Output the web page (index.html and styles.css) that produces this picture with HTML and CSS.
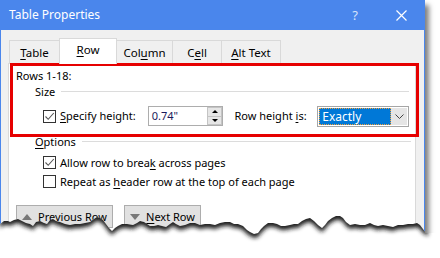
FILE: index.html
```html
<!DOCTYPE html>
<html lang="en">
<head>
    <meta charset="UTF-8">
    <title>Table Properties</title>
    <link rel="stylesheet" href="styles.css">
</head>
<body>
    <div class="window">
        <div class="titlebar">
            <span class="title">Table Properties</span>
            <span class="tb-btn help">?</span>
            <span class="tb-btn close">
                <svg width="11" height="11" viewBox="0 0 11 11"><path d="M0.5 0.5 L10.5 10.5 M10.5 0.5 L0.5 10.5" stroke="#fff" stroke-width="1.2" fill="none"/></svg>
            </span>
        </div>

        <div class="frame">
            <div class="tabs">
                <div class="tab tab-table"><u>T</u>able</div>
                <div class="tab tab-row active"><u>R</u>ow</div>
                <div class="tab tab-column">Col<u>u</u>mn</div>
                <div class="tab tab-cell">C<u>e</u>ll</div>
                <div class="tab tab-alt"><u>A</u>lt Text</div>
            </div>

            <div class="panel">
                <!-- red annotation box around the size settings -->
                <div class="rows-box">
                    <div class="rows-title">Rows 1-18:</div>
                    <div class="group-head size-head"><span>Size</span><i class="rule"></i></div>
                    <div class="size-row">
                        <label class="check size-check">
                            <span class="box"><svg width="11" height="11" viewBox="0 0 11 11"><path d="M1.5 5.5 L4.2 8.3 L9.8 2" stroke="#555" stroke-width="1.1" fill="none"/></svg></span>
                            <span><u>S</u>pecify height:</span>
                        </label>
                        <div class="spin">
                            <span class="spin-val">0.74"</span>
                            <span class="spin-btns">
                                <b class="spin-up"></b>
                                <b class="spin-down"></b>
                            </span>
                        </div>
                        <span class="rh-label">Row height <u>i</u>s:</span>
                        <div class="select">
                            <span class="sel-val">Exactly</span>
                            <span class="sel-arrow"><svg width="9" height="5" viewBox="0 0 9 5"><path d="M0.5 0.5 L4.5 4.5 L8.5 0.5" stroke="#444" stroke-width="1" fill="none"/></svg></span>
                        </div>
                    </div>
                </div>

                <div class="group-head options-head"><span><u>O</u>ptions</span><i class="rule"></i></div>
                <div class="option-list">
                    <label class="check">
                        <span class="box"><svg width="11" height="11" viewBox="0 0 11 11"><path d="M1.5 5.5 L4.2 8.3 L9.8 2" stroke="#555" stroke-width="1.1" fill="none"/></svg></span>
                        <span>Allow row to brea<u>k</u> across pages</span>
                    </label>
                    <label class="check">
                        <span class="box"></span>
                        <span>Repeat as <u>h</u>eader row at the top of each page</span>
                    </label>
                </div>

                <div class="nav">
                    <button class="nav-btn prev"><i class="tri tri-up"></i><span><u>P</u>revious Row</span></button>
                    <button class="nav-btn next"><i class="tri tri-down"></i><span><u>N</u>ext Row</span></button>
                </div>
            </div>
        </div>
    </div>

    <!-- torn paper edge over the bottom of the dialog -->
    <svg class="tear" width="440" height="58" viewBox="0 200 440 58">
        <defs>
            <filter id="soft" x="-5%" y="-50%" width="110%" height="200%">
                <feGaussianBlur stdDeviation="2"/>
            </filter>
            <clipPath id="below">
                <polygon points="0,224 4,221 8,221 10,222 14,220 18,219 22,221 26,223 30,224 33,226 36,222 40,221 44,223 47,224 50,220 53,219 56,221 60,222 65,224 70,225 75,224 80,224 85,223 90,222 94,219 97,217 100,218 103,220 106,224 109,228 112,231 115,228 118,226 122,224 127,224 133,225 137,223 140,221 144,222 147,224 150,226 154,226 158,225 162,226 166,227 170,224 173,222 176,224 180,226 185,225 190,223 195,223 200,225 205,224 210,224 215,225 220,223 225,222 230,222 234,224 238,224 243,226 247,230 250,232 254,234 258,233 261,229 264,226 268,223 273,223 277,224 281,226 285,226 290,225 294,224 298,224 302,221 306,219 310,218 314,221 318,225 322,228 325,225 328,221 332,218 336,216 340,216 343,218 346,222 350,225 355,224 360,225 365,225 370,223 374,225 378,226 383,225 388,226 393,227 398,225 403,225 408,224 413,224 417,223 420,225 423,229 426,233 440,233 440,258 0,258"/>
            </clipPath>
        </defs>
        <polygon points="0,224 4,221 8,221 10,222 14,220 18,219 22,221 26,223 30,224 33,226 36,222 40,221 44,223 47,224 50,220 53,219 56,221 60,222 65,224 70,225 75,224 80,224 85,223 90,222 94,219 97,217 100,218 103,220 106,224 109,228 112,231 115,228 118,226 122,224 127,224 133,225 137,223 140,221 144,222 147,224 150,226 154,226 158,225 162,226 166,227 170,224 173,222 176,224 180,226 185,225 190,223 195,223 200,225 205,224 210,224 215,225 220,223 225,222 230,222 234,224 238,224 243,226 247,230 250,232 254,234 258,233 261,229 264,226 268,223 273,223 277,224 281,226 285,226 290,225 294,224 298,224 302,221 306,219 310,218 314,221 318,225 322,228 325,225 328,221 332,218 336,216 340,216 343,218 346,222 350,225 355,224 360,225 365,225 370,223 374,225 378,226 383,225 388,226 393,227 398,225 403,225 408,224 413,224 417,223 420,225 423,229 426,233 440,233 440,258 0,258" fill="#fff"/>
        <g clip-path="url(#below)">
            <polygon class="tear-shadow" filter="url(#soft)" points="0,228 4,225 8,225 10,226 14,224 18,223 22,225 26,227 30,228 33,230 36,226 40,225 44,227 47,228 50,224 53,223 56,225 60,226 65,228 70,229 75,228 80,228 85,227 90,226 94,223 97,221 100,222 103,224 106,228 109,232 112,235 115,232 118,230 122,228 127,228 133,229 137,227 140,225 144,226 147,228 150,230 154,230 158,229 162,230 166,231 170,228 173,226 176,228 180,230 185,229 190,227 195,227 200,229 205,228 210,228 215,229 220,227 225,226 230,226 234,228 238,228 243,230 247,234 250,236 254,238 258,237 261,233 264,230 268,227 273,227 277,228 281,230 285,230 290,229 294,228 298,228 302,225 306,223 310,222 314,225 318,229 322,232 325,229 328,225 332,222 336,220 340,220 343,222 346,226 350,229 355,228 360,229 365,229 370,227 374,229 378,230 383,229 388,230 393,231 398,229 403,229 408,228 413,228 417,227 420,229 423,233 428,236 428,200 0,200"/>
        </g>
    </svg>
</body>
</html>
```

FILE: styles.css
```css
body {
    margin: 0;
    background: #fff;
    font-family: "Noto Sans", "Open Sans", sans-serif;
    font-size: 11px;
    color: #000;
    position: relative;
    width: 440px;
    height: 258px;
    overflow: hidden;
}
u {
    text-decoration-thickness: 1px;
    text-underline-offset: 2px;
}
.window {
    width: 425px;
    height: 240px;
    box-sizing: border-box;
    border-left: 1px solid #4a86ec;
    border-right: 1px solid #4a86ec;
    background: #f0f0f0;
    box-shadow: 4px 5px 5px rgba(0,0,0,0.5);
    overflow: hidden;
}
.titlebar {
    height: 30px;
    background: #4a86ec;
    color: #fff;
    display: flex;
    align-items: center;
    line-height: 16px;
    font-size: 12px;
}
.title {
    padding-left: 8px;
    flex: 1;
}
.tb-btn {
    width: 46px;
    text-align: center;
    display: flex;
    justify-content: center;
}
.help {
    color: #d8e4fa;
    font-size: 13px;
}
.frame {
    padding: 8px 8px 0 7px;
}
.tabs {
    display: flex;
    align-items: flex-end;
    padding-left: 1px;
    margin-bottom: -1px;
    line-height: 16px;
    font-size: 11.5px;
}
.tab {
    height: 24px;
    box-sizing: border-box;
    border: 1px solid #d9d9d9;
    border-bottom: none;
    background: #f0f0f0;
    text-align: center;
    padding-top: 4px;
    margin-left: -1px;
}
.tab-table { width: 51px; margin-left: 0; }
.tab-row { width: 58px; }
.tab-column { width: 57px; }
.tab-cell { width: 50px; }
.tab-alt { width: 60px; }
.tab.active {
    height: 26px;
    background: #fff;
    padding-top: 3px;
    position: relative;
    z-index: 2;
}
.panel {
    position: relative;
    z-index: 1;
    width: 408px;
    height: 200px;
    box-sizing: border-box;
    background: #fff;
    border: 1px solid #d9d9d9;
    line-height: 16px;
}
.rows-box {
    margin: -1px 0 0 1px;
    width: 409px;
    box-sizing: border-box;
    border: 3px solid #e60000;
    padding: 2px 7px 8px 3px;
}
.group-head {
    display: flex;
    align-items: center;
}
.rule {
    flex: 1;
    height: 1px;
    background: #dcdcdc;
    margin: -2px 0 0 6px;
}
.size-head {
    padding-left: 19px;
}
.size-row {
    display: flex;
    align-items: center;
    height: 20px;
    margin-top: 6px;
    padding-left: 27px;
}
.check {
    display: flex;
    align-items: center;
    gap: 4px;
    height: 17px;
    white-space: nowrap;
}
.box {
    width: 13px;
    height: 13px;
    box-sizing: border-box;
    border: 1px solid #333;
    background: #fff;
    display: flex;
    align-items: center;
    justify-content: center;
}
.size-check {
    width: 105px;
}
.spin {
    width: 75px;
    height: 20px;
    box-sizing: border-box;
    border: 1px solid #adadad;
    display: flex;
}
.spin-val {
    flex: 1;
    padding-left: 3px;
    line-height: 18px;
    color: #1a1a5c;
}
.spin-btns {
    width: 15px;
    display: flex;
    flex-direction: column;
}
.spin-btns b {
    flex: 1;
    background: #e6e6e6;
    border: 1px solid #c4c4c4;
    position: relative;
}
.spin-btns b + b {
    border-top: none;
}
.spin-up::after,
.spin-down::after {
    content: "";
    position: absolute;
    left: 4px;
    top: 2px;
    border-left: 3px solid transparent;
    border-right: 3px solid transparent;
}
.spin-up::after { border-bottom: 3px solid #000; }
.spin-down::after { border-top: 3px solid #000; }
.rh-label {
    margin-left: 12px;
    width: 83px;
    white-space: nowrap;
}
.select {
    width: 92px;
    height: 21px;
    box-sizing: border-box;
    border: 1px solid #a6a6a6;
    display: flex;
    padding: 1px;
    background: #fff;
}
.sel-val {
    flex: 1;
    background: #0078d7;
    color: #fff;
    border: 1px dotted #f3a13a;
    line-height: 15px;
    padding-left: 2px;
    font-size: 12px;
}
.sel-arrow {
    width: 16px;
    background: #e5e5e5;
    display: flex;
    align-items: center;
    justify-content: center;
}
.options-head {
    margin-top: -3px;
    padding-left: 26px;
    padding-right: 4px;
}
.option-list {
    display: flex;
    flex-direction: column;
    gap: 2px;
    margin-top: 4px;
    padding-left: 34px;
}
.nav {
    display: flex;
    gap: 11px;
    margin-top: 15px;
    padding-left: 7px;
}
.nav-btn {
    height: 23px;
    border: 1px solid #adadad;
    background: #e1e1e1;
    font: inherit;
    white-space: nowrap;
    display: flex;
    align-items: center;
    gap: 6px;
    padding: 0 0 0 5px;
}
.prev { width: 97px; }
.next { width: 77px; }
.tri {
    width: 0;
    height: 0;
    border-left: 5px solid transparent;
    border-right: 5px solid transparent;
}
.tri-up { border-bottom: 6px solid #777; }
.tri-down { border-top: 6px solid #777; }
.tear {
    position: absolute;
    left: 0;
    top: 200px;
    z-index: 5;
}
.tear-shadow {
    fill: #1a1a1a;
}
```
